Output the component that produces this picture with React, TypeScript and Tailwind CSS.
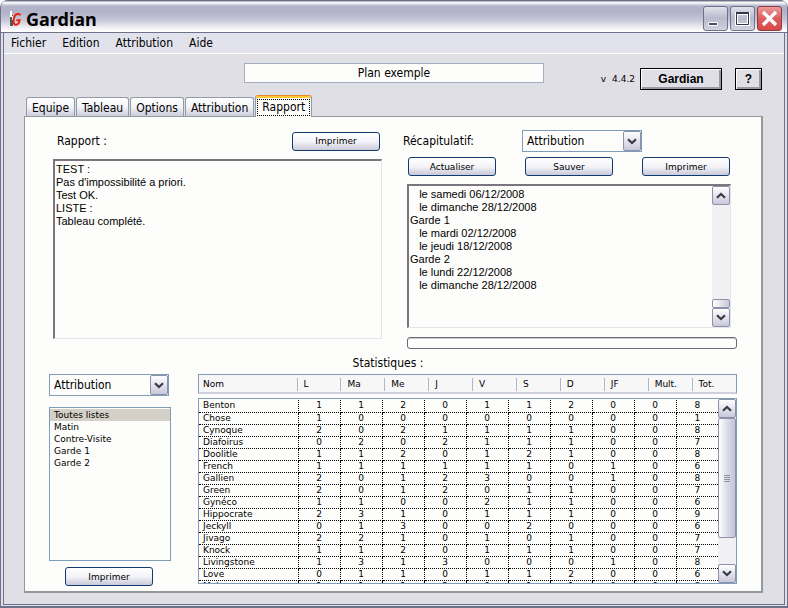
import { useState, type ReactNode } from "react";
import { clsx } from "clsx";

const menus = ["Fichier", "Edition", "Attribution", "Aide"];
const tabs = ["Equipe", "Tableau", "Options", "Attribution", "Rapport"];
const lists = ["Toutes listes", "Matin", "Contre-Visite", "Garde 1", "Garde 2"];
const columns = ["Nom", "L", "Ma", "Me", "J", "V", "S", "D", "JF", "Mult.", "Tot."];

const report = `TEST :
Pas d'impossibilité a priori.
Test OK.
LISTE :
Tableau complété.`;

const summary = `   le samedi 06/12/2008
   le dimanche 28/12/2008
Garde 1
   le mardi 02/12/2008
   le jeudi 18/12/2008
Garde 2
   le lundi 22/12/2008
   le dimanche 28/12/2008`;

const stats: [string, number[]][] = [
  ["Benton", [1, 1, 2, 0, 1, 1, 2, 0, 0, 8]],
  ["Chose", [1, 0, 0, 0, 0, 0, 0, 0, 0, 1]],
  ["Cynoque", [2, 0, 2, 1, 1, 1, 1, 0, 0, 8]],
  ["Diafoirus", [0, 2, 0, 2, 1, 1, 1, 0, 0, 7]],
  ["Doolitle", [1, 1, 2, 0, 1, 2, 1, 0, 0, 8]],
  ["French", [1, 1, 1, 1, 1, 1, 0, 1, 0, 6]],
  ["Gallien", [2, 0, 1, 2, 3, 0, 0, 1, 0, 8]],
  ["Green", [2, 0, 1, 2, 0, 1, 1, 0, 0, 7]],
  ["Gynéco", [1, 1, 0, 0, 2, 1, 1, 0, 0, 6]],
  ["Hippocrate", [2, 3, 1, 0, 1, 1, 1, 0, 0, 9]],
  ["Jeckyll", [0, 1, 3, 0, 0, 2, 0, 0, 0, 6]],
  ["Jivago", [2, 2, 1, 0, 1, 0, 1, 0, 0, 7]],
  ["Knock", [1, 1, 2, 0, 1, 1, 1, 0, 0, 7]],
  ["Livingstone", [1, 3, 1, 3, 0, 0, 0, 1, 0, 8]],
  ["Love", [0, 1, 1, 0, 1, 1, 2, 0, 0, 6]],
  ["Mabuse", [1, 1, 1, 2, 0, 1, 1, 0, 0, 8]],
];

function Chevron({ up = false }: { up?: boolean }) {
  return (
    <svg width="10" height="7" viewBox="0 0 10 7" className={clsx(up && "rotate-180")} aria-hidden="true">
      <path d="M1 1.2 L5 5 L9 1.2" fill="none" stroke="#3a3a42" strokeWidth="2.2" />
    </svg>
  );
}

function PushButton({ children }: { children: ReactNode }) {
  return (
    <button className="h-[19px] w-[88px] rounded-[3px] border border-[#0f3b70] bg-gradient-to-b from-white via-[#f4f4f8] to-[#c9c9da] pt-px font-['DejaVu_Sans',sans-serif] text-[9px] leading-none text-black">
      {children}
    </button>
  );
}

function ComboBox({ label }: { label: string }) {
  return (
    <div className="relative h-[22px] w-[120px] shrink-0">
      <select
        aria-label={label}
        className="h-full w-full appearance-none border border-[#7f9db9] bg-[#fdfdfb] pl-1 text-[12px] leading-none text-black"
      >
        <option>Attribution</option>
      </select>
      <span className="pointer-events-none absolute inset-y-px right-px flex w-[18px] items-center justify-center rounded-[2px] border border-[#8f91a8] bg-gradient-to-b from-white to-[#c8c8dc]">
        <Chevron />
      </span>
    </div>
  );
}

function ScrollButton({ up = false }: { up?: boolean }) {
  return (
    <button
      aria-label={up ? "Défiler vers le haut" : "Défiler vers le bas"}
      className="flex h-[19px] w-full shrink-0 items-center justify-center rounded-[2px] border border-[#8f91a8] bg-gradient-to-b from-white to-[#c8c8dc]"
    >
      <Chevron up={up} />
    </button>
  );
}

function TitleBar() {
  const frame = "flex size-[25px] items-center justify-center rounded-[3px] border";
  const grey = "border-[#6e708c] bg-gradient-to-b from-[#e2e2ec] via-[#b9bacb] to-[#d2d3e0]";
  return (
    <header className="flex h-[33px] shrink-0 items-center border-b border-[#6e708c] bg-[linear-gradient(to_bottom,#6f7189_0px,#6f7189_1px,#ffffff_2px,#f4f4f8_3px,#b4b5c9_6px,#b1b2c8_12px,#c6c7d6_20px,#ececf1_27px,#ffffff_31px,#ffffff_33px)] pl-2 pr-[5px] pt-[5px]">
      <svg width="13" height="17" viewBox="0 0 13 17" aria-hidden="true">
        <path d="M1 5h3v11H1z" fill="#56585f" />
        <path d="M1 1h2v5h2v4H3V7H1z" fill="#fff" />
        <path
          d="M11.6 5.2C10 3.2 6.6 3.6 5.4 6.6C4 10 4 14.6 6.8 14.8C9 14.9 10.2 13 10.6 10.2H7.4"
          fill="none"
          stroke="#e8200c"
          strokeWidth="2"
        />
      </svg>
      <h1 className="ml-1 flex-1 font-['Noto_Sans',sans-serif] text-[18px] leading-none font-bold text-black">Gardian</h1>
      <div className="flex gap-0.5">
        <button aria-label="Réduire" className={clsx(frame, grey)}>
          <svg width="17" height="17" viewBox="0 0 17 17" aria-hidden="true">
            <path d="M1.500 12.500h9v3h-9z" fill="#4b4c60" stroke="#fff" />
          </svg>
        </button>
        <button aria-label="Agrandir" className={clsx(frame, grey)}>
          <svg width="17" height="17" viewBox="0 0 17 17" aria-hidden="true">
            <path d="M2.500 3.500h12v11h-12z" fill="none" stroke="#fff" strokeWidth="3" />
            <path d="M2.500 3.500h12v11h-12z" fill="none" stroke="#34354a" />
            <path d="M2 3h13" stroke="#34354a" strokeWidth="2" />
          </svg>
        </button>
        <button
          aria-label="Fermer"
          className={clsx(frame, "border-[#8e3a44] bg-gradient-to-b from-[#ec9a9a] via-[#dc5c5c] to-[#d84848]")}
        >
          <svg width="17" height="17" viewBox="0 0 17 17" aria-hidden="true">
            <path d="M2 2L15 15M15 2L2 15" stroke="#fff" strokeWidth="3.4" />
          </svg>
        </button>
      </div>
    </header>
  );
}

function ReportPane() {
  return (
    <section>
      <div className="flex h-6 items-center justify-between pr-0.5 pl-1">
        <label htmlFor="report">Rapport :</label>
        <PushButton>Imprimer</PushButton>
      </div>
      <textarea
        id="report"
        readOnly
        defaultValue={report}
        className="mt-1.5 block h-[180px] w-full resize-none border border-t-2 border-l-2 border-[#e6e6ea] border-t-[#7b7580] border-l-[#7b7580] bg-[#fdfdfb] pt-0.5 pl-px font-['Liberation_Sans',sans-serif] text-[11px] leading-[13px] text-black"
      />
    </section>
  );
}

function SummaryPane() {
  return (
    <section>
      <div className="flex h-6 items-center">
        <label htmlFor="summary" className="w-[115px] -indent-1">
          Récapitulatif:
        </label>
        <ComboBox label="Récapitulatif par" />
      </div>
      <div className="mt-1 flex justify-between pr-[7px] pl-px">
        <PushButton>Actualiser</PushButton>
        <PushButton>Sauver</PushButton>
        <PushButton>Imprimer</PushButton>
      </div>
      <div className="mt-2 mr-1.5 flex h-[144px] border border-t-2 border-l-2 border-[#e6e6ea] border-t-[#7b7580] border-l-[#7b7580] bg-[#fdfdfb]">
        <textarea
          id="summary"
          readOnly
          defaultValue={summary}
          className="min-w-0 flex-1 resize-none overflow-hidden pt-0.5 pl-px font-['Liberation_Sans',sans-serif] text-[11px] leading-[13px] text-black"
        />
        <div className="flex w-[18px] flex-col bg-[#f1f1f4]">
          <ScrollButton up />
          <div className="flex-1" />
          <div className="h-[9px] rounded-[2px] border border-[#8f91a8] bg-gradient-to-r from-white to-[#c8c8dc]" />
          <ScrollButton />
        </div>
      </div>
      <div
        role="progressbar"
        aria-label="Progression"
        className="mt-[9px] h-3 rounded-[3px] border border-[#6c6978] bg-[#fdfdfb] shadow-[inset_0_1px_0_#c9c7cf]"
      />
    </section>
  );
}

function StatsTable() {
  return (
    <div className="flex min-w-0 flex-1 flex-col font-['DejaVu_Sans',sans-serif] text-[9px]">
      <div className="border border-b-2 border-[#7f9db9] border-b-[#cfcfde] bg-[#f7f7f7] pt-[3px] pb-px">
        <table className="w-full table-fixed border-collapse leading-[13px]">
          <colgroup>
            <col className="w-[98px]" />
          </colgroup>
          <thead>
            <tr>
              {columns.map((name) => (
                <th
                  key={name}
                  scope="col"
                  className="h-[13px] border-r border-[#b4b4c8] p-0 pl-1.5 text-left font-normal first:pl-1 last:border-r-0"
                >
                  {name}
                </th>
              ))}
            </tr>
          </thead>
        </table>
      </div>
      <div className="mt-1 flex h-[186px] overflow-hidden border border-[#7f9db9] bg-[#fdfdfb]">
        <div className="min-w-0 flex-1 overflow-hidden pt-px">
          <table aria-label="Statistiques" className="w-full table-fixed border-collapse">
            <colgroup>
              <col className="w-[99px]" />
            </colgroup>
            <tbody>
              {stats.map(([name, values]) => (
                <tr key={name}>
                  <th
                    scope="row"
                    className="h-3 overflow-hidden border-r border-b border-dotted border-black p-0 pl-1 text-left leading-[11px] font-normal"
                  >
                    {name}
                  </th>
                  {values.map((value, i) => (
                    <td
                      key={columns[i + 1]}
                      className="h-3 border-r border-b border-dotted border-black p-0 text-center leading-[11px] last:border-r-0"
                    >
                      {value}
                    </td>
                  ))}
                </tr>
              ))}
            </tbody>
          </table>
        </div>
        <div className="flex w-[18px] shrink-0 flex-col bg-[#f1f1f4]">
          <ScrollButton up />
          <div className="flex h-[120px] flex-col items-center justify-center gap-px rounded-[2px] border border-[#8f91a8] bg-gradient-to-r from-white via-[#dcdce8] to-[#c4c4d8]">
            <span className="h-px w-1.5 bg-[#8f91a8]" />
            <span className="h-px w-1.5 bg-[#8f91a8]" />
            <span className="h-px w-1.5 bg-[#8f91a8]" />
            <span className="h-px w-1.5 bg-[#8f91a8]" />
          </div>
          <div className="flex-1" />
          <ScrollButton />
        </div>
      </div>
    </div>
  );
}

export default function App() {
  const [tab, setTab] = useState(4);
  const [list, setList] = useState(0);

  return (
    <div className="flex min-h-screen flex-col overflow-hidden rounded-t-lg border-x border-b-2 border-[#6e708c] bg-[#e0dfe6] font-['DejaVu_Sans_Condensed','DejaVu_Sans',sans-serif] text-[12px] leading-4 text-black">
      <TitleBar />
      <div className="mx-0.5 mb-px flex flex-1 flex-col border-x border-b border-[#6e708c]">
        <nav className="flex h-[21px] shrink-0 items-center gap-4 border-b border-white bg-[#e1e2ec] pl-[7px]">
          {menus.map((menu) => (
            <button key={menu}>{menu}</button>
          ))}
        </nav>

        <div className="flex flex-1 flex-col pr-[21px] pb-[11px] pl-5">
          <div className="mt-[9px] grid grid-cols-[220px_300px_1fr] items-start">
            <input
              aria-label="Nom du plan"
              defaultValue="Plan exemple"
              className="col-start-2 h-5 min-w-0 border border-[#a3adc0] bg-[#fdfdfb] text-center"
            />
            <div className="mt-[5px] flex items-center justify-end pr-px font-['DejaVu_Sans',sans-serif]">
              <span className="mr-[5px] flex gap-1.5 text-[9px]">
                <span>v</span>
                <span>4.4.2</span>
              </span>
              <button className="h-[22px] w-[82px] border border-black bg-[#e0dfe6] font-['Liberation_Sans',sans-serif] text-[12px] font-bold shadow-[inset_1px_1px_0_#fff,inset_-2px_-2px_0_#9a99a3]">
                Gardian
              </button>
              <button className="ml-[13px] h-[22px] w-[27px] border border-black bg-[#e0dfe6] font-['Liberation_Sans',sans-serif] text-[12px] font-bold shadow-[inset_1px_1px_0_#fff,inset_-2px_-2px_0_#9a99a3]">
                ?
              </button>
            </div>
          </div>

          <div role="tablist" className="mt-[5px] flex h-[21px] items-end gap-px pl-0.5">
            {tabs.map((name, i) => (
              <button
                key={name}
                role="tab"
                aria-selected={i === tab}
                onClick={() => setTab(i)}
                className={clsx(
                  "rounded-t-[3px] border border-b-0 border-[#919ba5]",
                  i === tab
                    ? "z-10 -mb-px h-[22px] border-t-[#e68b2c] bg-[#fdfdfb] p-px shadow-[inset_0_2px_0_#ffc73c]"
                    : "h-[19px] bg-gradient-to-b from-white via-[#f3f3f8] to-[#cdcddd] px-[5px] pt-px"
                )}
              >
                {i === tab ? (
                  <span className="mt-px block border border-dotted border-black px-1 leading-[15px]">{name}</span>
                ) : (
                  name
                )}
              </button>
            ))}
          </div>

          <main className="flex flex-1 flex-col border border-r-2 border-b-2 border-[#919b9c] bg-[#fdfdfb] pt-3 pr-6 pl-6">
            <div className="grid grid-cols-[329fr_330fr] gap-x-[25px] pl-1">
              <ReportPane />
              <SummaryPane />
            </div>
            <h2 className="mt-1.5 pr-2.5 text-center">Statistiques :</h2>
            <div className="mt-[3px] flex gap-[27px]">
              <div className="flex w-[122px] shrink-0 flex-col">
                <ComboBox label="Statistiques par" />
                <ul className="mt-[11px] h-[154px] border border-[#7f9db9] pt-px font-['DejaVu_Sans',sans-serif] text-[9px]">
                  {lists.map((name, i) => (
                    <li key={name}>
                      <button
                        onClick={() => setList(i)}
                        className={clsx("block h-3 w-full pl-1 text-left leading-3", i === list && "bg-[#d4d0c8]")}
                      >
                        {name}
                      </button>
                    </li>
                  ))}
                </ul>
                <div className="mt-1.5 flex pl-4">
                  <PushButton>Imprimer</PushButton>
                </div>
              </div>
              <StatsTable />
            </div>
          </main>
        </div>
      </div>
    </div>
  );
}
